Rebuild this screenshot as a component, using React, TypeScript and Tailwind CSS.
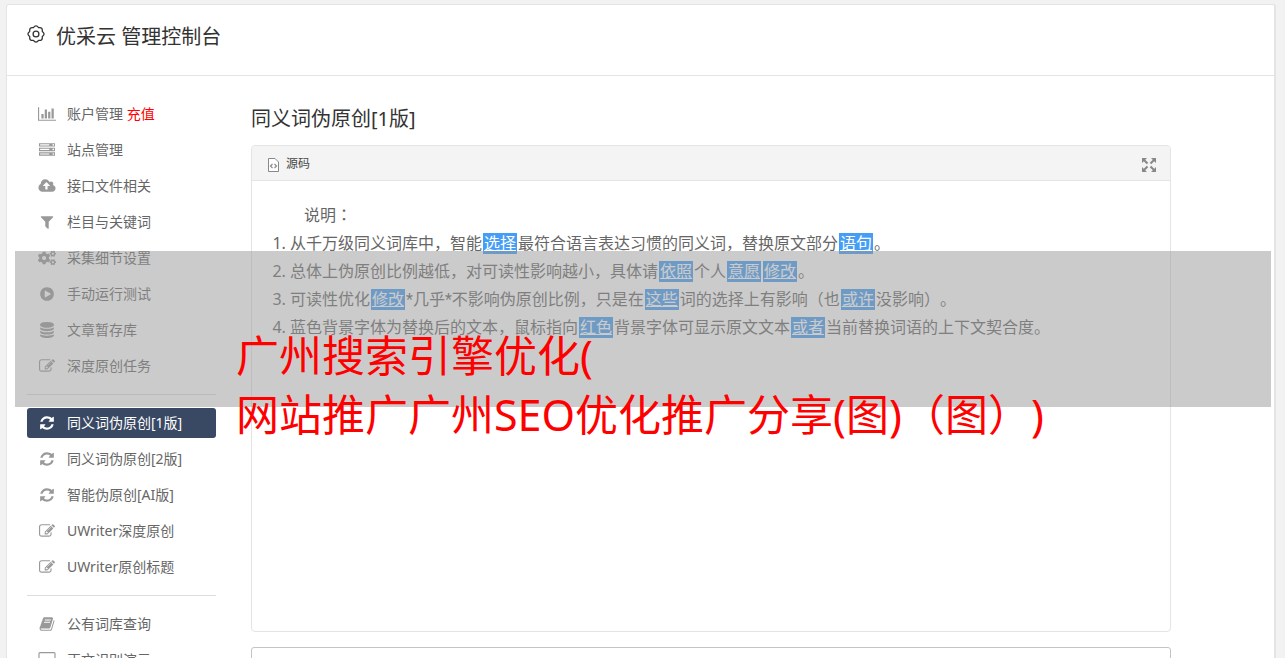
import type { ReactNode } from "react";
import { FaCogs } from "react-icons/fa";

const icons = {
  chart:
    "M640 896v512h-256v-512h256zm384-512v1024h-256v-1024h256zm1024 1152v128h-2048v-1536h128v1408h1920zm-640-896v768h-256v-768h256zm384-384v1152h-256v-1152h256z",
  server:
    "M128 1408h1024v-128h-1024v128zm0-512h1024v-128h-1024v128zm1568 448q0-40-28-68t-68-28-68 28-28 68 28 68 68 28 68-28 28-68zm-1568-960h1024v-128h-1024v128zm1568 448q0-40-28-68t-68-28-68 28-28 68 28 68 68 28 68-28 28-68zm0-512q0-40-28-68t-68-28-68 28-28 68 28 68 68 28 68-28 28-68zm96 832v384h-1792v-384h1792zm0-512v384h-1792v-384h1792zm0-512v384h-1792v-384h1792z",
  cloud:
    "M1280 864q0-14-9-23l-352-352q-9-9-23-9t-23 9l-351 351q-10 12-10 24 0 14 9 23t23 9h224v352q0 13 9.500 22.500t22.500 9.500h192q13 0 22.500-9.500t9.500-22.500v-352h224q13 0 22.500-9.500t9.500-22.500zm640 288q0 159-112.500 271.500t-271.500 112.500h-1088q-185 0-316.500-131.500t-131.500-316.500q0-130 70-240t188-165q-2-30-2-43 0-212 150-362t362-150q156 0 285.500 87t188.500 231q71-62 166-62 106 0 181 75t75 181q0 76-41 138 130 31 213.500 135.500t83.500 238.500z",
  filter:
    "M1595 295q17 41-14 70l-493 493v742q0 42-39 59-13 5-25 5-27 0-45-19l-256-256q-19-19-19-45v-486l-493-493q-31-29-14-70 17-39 59-39h1280q42 0 59 39z",
  play:
    "M896 128q209 0 385.500 103t279.500 279.500 103 385.500-103 385.500-279.500 279.500-385.500 103-385.500-103-279.500-279.500-103-385.500 103-385.500 279.500-279.500 385.500-103zm384 823q32-18 32-55t-32-55l-544-320q-31-19-64-1-32 19-32 56v640q0 37 32 56 16 8 32 8 17 0 32-9z",
  database:
    "M896 768q237 0 443-43t325-127v170q0 69-103 128t-280 93.500-385 34.500-385-34.500-280-93.500-103-128v-170q119 84 325 127t443 43zm0 768q237 0 443-43t325-127v170q0 69-103 128t-280 93.500-385 34.500-385-34.500-280-93.500-103-128v-170q119 84 325 127t443 43zm0-384q237 0 443-43t325-127v170q0 69-103 128t-280 93.500-385 34.500-385-34.500-280-93.500-103-128v-170q119 84 325 127t443 43zm0-1152q208 0 385 34.500t280 93.500 103 128v128q0 69-103 128t-280 93.500-385 34.500-385-34.500-280-93.500-103-128v-128q0-69 103-128t280-93.500 385-34.500z",
  edit:
    "M888 1184l116-116-152-152-116 116v56h96v96h56zm440-720q-16-16-33 1l-350 350q-17 17-1 33t33-1l350-350q17-17 1-33zm80 594v190q0 119-84.500 203.500t-203.500 84.500h-832q-119 0-203.500-84.500t-84.500-203.500v-832q0-119 84.500-203.500t203.500-84.500h832q63 0 117 25 15 7 18 23 3 17-9 29l-49 49q-14 14-32 8-23-6-45-6h-832q-66 0-113 47t-47 113v832q0 66 47 113t113 47h832q66 0 113-47t47-113v-126q0-13 9-22l64-64q15-15 35-7t20 29zm-96-738l288 288-672 672h-288v-288zm444 132l-92 92-288-288 92-92q28-28 68-28t68 28l152 152q28 28 28 68t-28 68z",
  refresh:
    "M1639 1056q0 5-1 7-64 268-268 434.500t-478 166.500q-146 0-282.500-55t-243.500-157l-129 129q-19 19-45 19t-45-19-19-45v-448q0-26 19-45t45-19h448q26 0 45 19t19 45-19 45l-137 137q71 66 161 102t187 36q134 0 250-65t186-179q11-17 53-117 8-23 30-23h192q13 0 22.500 9.500t9.500 22.500zm25-800v448q0 26-19 45t-45 19h-448q-26 0-45-19t-19-45 19-45l138-138q-148-137-349-137-134 0-250 65t-186 179q-11 17-53 117-8 23-30 23h-199q-13 0-22.500-9.500t-9.500-22.500v-7q65-268 270-434.500t480-166.500q146 0 284 55.500t245 156.500l130-129q19-19 45-19t45 19 19 45z",
  book:
    "M1703 478q40 57 18 129l-275 906q-19 64-76.500 107.500t-122.500 43.500h-923q-77 0-148.500-53.500t-99.500-131.500q-24-67-2-127 0-4 3-27t4-37q1-8-3-21.500t-3-19.500q2-11 8-21t16.500-23.500 16.500-23.500q23-38 45-91.500t30-91.500q3-10 .5-30t-.5-28q3-11 17-28t17-23q21-36 42-92t25-90q1-9-2.500-32t.5-28q4-13 22-30.500t22-22.500q19-26 42.500-84.500t27.500-96.500q1-8-3-25.500t-2-26.500q2-8 9-18t18-23 17-21q8-12 16.500-30.500t15-35 16-36 19.500-32 26.500-23.500 36-11.500 47.500 5.500l-1 3q38-9 51-9h761q74 0 114 56t18 130l-274 906q-36 119-71.500 153.500t-128.500 34.500h-869q-27 0-38 15-11 16-1 43 24 70 144 70h923q29 0 56-15.500t35-41.500l300-987q7-22 5-57 38 15 59 43zm-1064 2q-4 13 2 22.500t20 9.500h608q13 0 25.500-9.500t16.500-22.500l21-64q4-13-2-22.500t-20-9.500h-608q-13 0-25.500 9.500t-16.500 22.500zm-83 256q-4 13 2 22.500t20 9.500h608q13 0 25.500-9.500t16.500-22.500l21-64q4-13-2-22.500t-20-9.500h-608q-13 0-25.500 9.500t-16.500 22.500z",
  desktop:
    "M1728 992v-832q0-13-9.500-22.500t-22.500-9.500h-1600q-13 0-22.500 9.500t-9.500 22.500v832q0 13 9.500 22.500t22.500 9.500h1600q13 0 22.500-9.500t9.500-22.500zm128-832v1088q0 66-47 113t-113 47h-544q0 37 16 77.500t32 71 16 43.500q0 26-19 45t-45 19h-512q-26 0-45-19t-19-45q0-14 16-44t32-70 16-78h-544q-66 0-113-47t-47-113v-1088q0-66 47-113t113-47h1600q66 0 113 47t47 113z",
};

type IconName = keyof typeof icons | "cogs";

const wide: Partial<Record<IconName, string>> = {
  chart: "0 0 2048 1792",
  cloud: "0 0 1920 1792",
  desktop: "-64 0 1920 1792",
};

function Icon({ name }: { name: IconName }) {
  if (name === "cogs") return <FaCogs className="h-4 w-[18px]" />;
  return (
    <svg
      viewBox={wide[name] ?? "0 0 1792 1792"}
      className={wide[name] ? "h-4 w-[18px]" : "size-4"}
      fill="currentColor"
      aria-hidden="true"
    >
      <path d={icons[name]} />
    </svg>
  );
}

type Item = { icon: IconName; label: string; extra?: string; active?: boolean };

const groups: Item[][] = [
  [
    { icon: "chart", label: "账户管理", extra: "充值" },
    { icon: "server", label: "站点管理" },
    { icon: "cloud", label: "接口文件相关" },
    { icon: "filter", label: "栏目与关键词" },
    { icon: "cogs", label: "采集细节设置" },
    { icon: "play", label: "手动运行测试" },
    { icon: "database", label: "文章暂存库" },
    { icon: "edit", label: "深度原创任务" },
  ],
  [
    { icon: "refresh", label: "同义词伪原创[1版]", active: true },
    { icon: "refresh", label: "同义词伪原创[2版]" },
    { icon: "refresh", label: "智能伪原创[AI版]" },
    { icon: "edit", label: "UWriter深度原创" },
    { icon: "edit", label: "UWriter原创标题" },
  ],
  [
    { icon: "book", label: "公有词库查询" },
    { icon: "desktop", label: "正文识别演示" },
  ],
];

function NavItem({ icon, label, extra, active }: Item) {
  return (
    <li>
      <a
        href="#"
        className={
          active
            ? "flex h-[30px] items-center rounded-[3px] bg-[#394963] text-white"
            : "flex h-[30px] items-center rounded-[3px] text-[#666]"
        }
      >
        <span
          className={
            active
              ? "flex w-10 justify-center text-white"
              : "flex w-10 justify-center text-[#999]"
          }
        >
          <Icon name={icon} />
        </span>
        <span>
          {label}
          {extra && <span className="text-[#f00]"> {extra}</span>}
        </span>
      </a>
    </li>
  );
}

function Word({ children }: { children: ReactNode }) {
  return (
    <span className="mx-px inline-block h-[21px] bg-[#459df5] px-px leading-5 text-white underline">
      {children}
    </span>
  );
}

function GearIcon() {
  return (
    <svg viewBox="0 0 18 18" className="size-[18px]" fill="none" stroke="#333" strokeWidth="1.3" aria-hidden="true">
      <circle cx="9" cy="9" r="2.9" />
      <path
        strokeLinejoin="round"
        d="M15.280 11.600Q15.900 15.900 11.600 15.280Q9 18.800 6.400 15.280Q2.100 15.900 2.720 11.600Q-.8 9 2.720 6.400Q2.100 2.100 6.400 2.720Q9-.8 11.600 2.720Q15.900 2.100 15.280 6.400Q18.800 9 15.280 11.600z"
      />
    </svg>
  );
}

export default function App() {
  return (
    <div className="relative h-screen overflow-hidden bg-[#f2f2f2] pt-1 pr-[9px] pl-[6px] font-['Noto_Sans','Noto_Sans_CJK_SC',sans-serif] text-sm text-[#666] [text-spacing-trim:space-all]">
      <div className="min-h-screen rounded-t-[3px] border border-r-2 border-[#e4e4e4] bg-white">
        <header className="flex h-[71px] items-start gap-[11px] border-b border-[#e4e4e4] pt-[14px] pl-5 text-[#333]">
          <span className="pt-[6px]">
            <GearIcon />
          </span>
          <h1 className="text-xl leading-9">优采云 管理控制台</h1>
        </header>

        <div className="flex items-start gap-[35px] pt-[23px] pr-[103px] pl-5">
          <nav className="w-[189px] shrink-0">
            {groups.map((group, i) => (
              <ul
                key={i}
                className={
                  i === 0
                    ? "flex flex-col gap-[6px]"
                    : "mt-[13px] flex flex-col gap-[6px] border-t border-[#ddd] pt-[13px]"
                }
              >
                {group.map((item) => (
                  <NavItem key={item.label} {...item} />
                ))}
              </ul>
            ))}
          </nav>

          <main className="min-w-0 flex-1">
            <h2 className="mb-[6px] text-xl leading-10 text-[#333]">同义词伪原创[1版]</h2>

            <section className="rounded border border-[#e4e4e4]">
              <div className="flex h-[35px] items-center justify-between rounded-t border-b border-[#e4e4e4] bg-[#f4f4f4] pr-[13px] pl-4">
                <button type="button" className="flex items-center gap-[7px] pt-px text-xs text-[#484848]">
                  <svg viewBox="0 0 11 14" className="mt-[3px] h-[14px] w-[11px]" fill="none" stroke="#888" aria-hidden="true">
                    <path d="M.5.500h6.500l3.500 3.500v9.500h-10z" fill="#fff" />
                    <path d="M4.500 6l-2 2 2 2M6.500 6l2 2-2 2" strokeWidth="1.200" />
                  </svg>
                  源码
                </button>
                <button type="button" aria-label="最大化" className="mt-1">
                  <svg viewBox="0 0 16 16" className="size-4" fill="#888" stroke="#888" aria-hidden="true">
                    <path stroke="none" d="M1 1h5l-5 5zM15 1v5l-5-5zM1 15v-5l5 5zM15 15h-5l5-5z" />
                    <path strokeWidth="2" d="M2.500 2.500l4 4M13.500 2.500l-4 4M2.500 13.500l4-4M13.500 13.500l-4-4" />
                  </svg>
                </button>
              </div>
              <div className="min-h-[450px] px-5 pt-5 text-base leading-7 text-[#666]">
                <p className="indent-8">
                  说明<span className="font-['Noto_Sans_CJK_TC',sans-serif] leading-none">：</span>
                </p>
                <ol className="list-decimal pl-[18px]">
                  <li>
                    从千万级同义词库中，智能<Word>选择</Word>最符合语言表达习惯的同义词，替换原文部分<Word>语句</Word>。
                  </li>
                  <li>
                    总体上伪原创比例越低，对可读性影响越小，具体请<Word>依照</Word>个人<Word>意愿</Word>
                    <Word>修改</Word>。
                  </li>
                  <li>
                    可读性优化<Word>修改</Word>
                    <span className="font-['Roboto','Noto_Sans_CJK_SC',sans-serif] leading-none">*几乎*</span>
                    不影响伪原创比例，只是在<Word>这些</Word>词的选择上有影响（也
                    <Word>或许</Word>没影响）。
                  </li>
                  <li>
                    蓝色背景字体为替换后的文本，鼠标指向<Word>红色</Word>背景字体可显示原文文本<Word>或者</Word>
                    当前替换词语的上下文契合度。
                  </li>
                </ol>
              </div>
            </section>

            <section className="mt-[15px] h-24 rounded-[3px] border border-[#c4c4c4]" />
          </main>
        </div>
      </div>

      <div className="absolute top-[251px] right-[14px] left-[15px] h-[156px] bg-[#979797]/50" />
      <p className="absolute top-[326px] left-[236px] text-[43px] leading-[59px] whitespace-nowrap text-[#f00]">
        广州搜索引擎优化(
        <br />
        网站推广广州SEO优化推广分享(图)（图）)
      </p>
    </div>
  );
}
